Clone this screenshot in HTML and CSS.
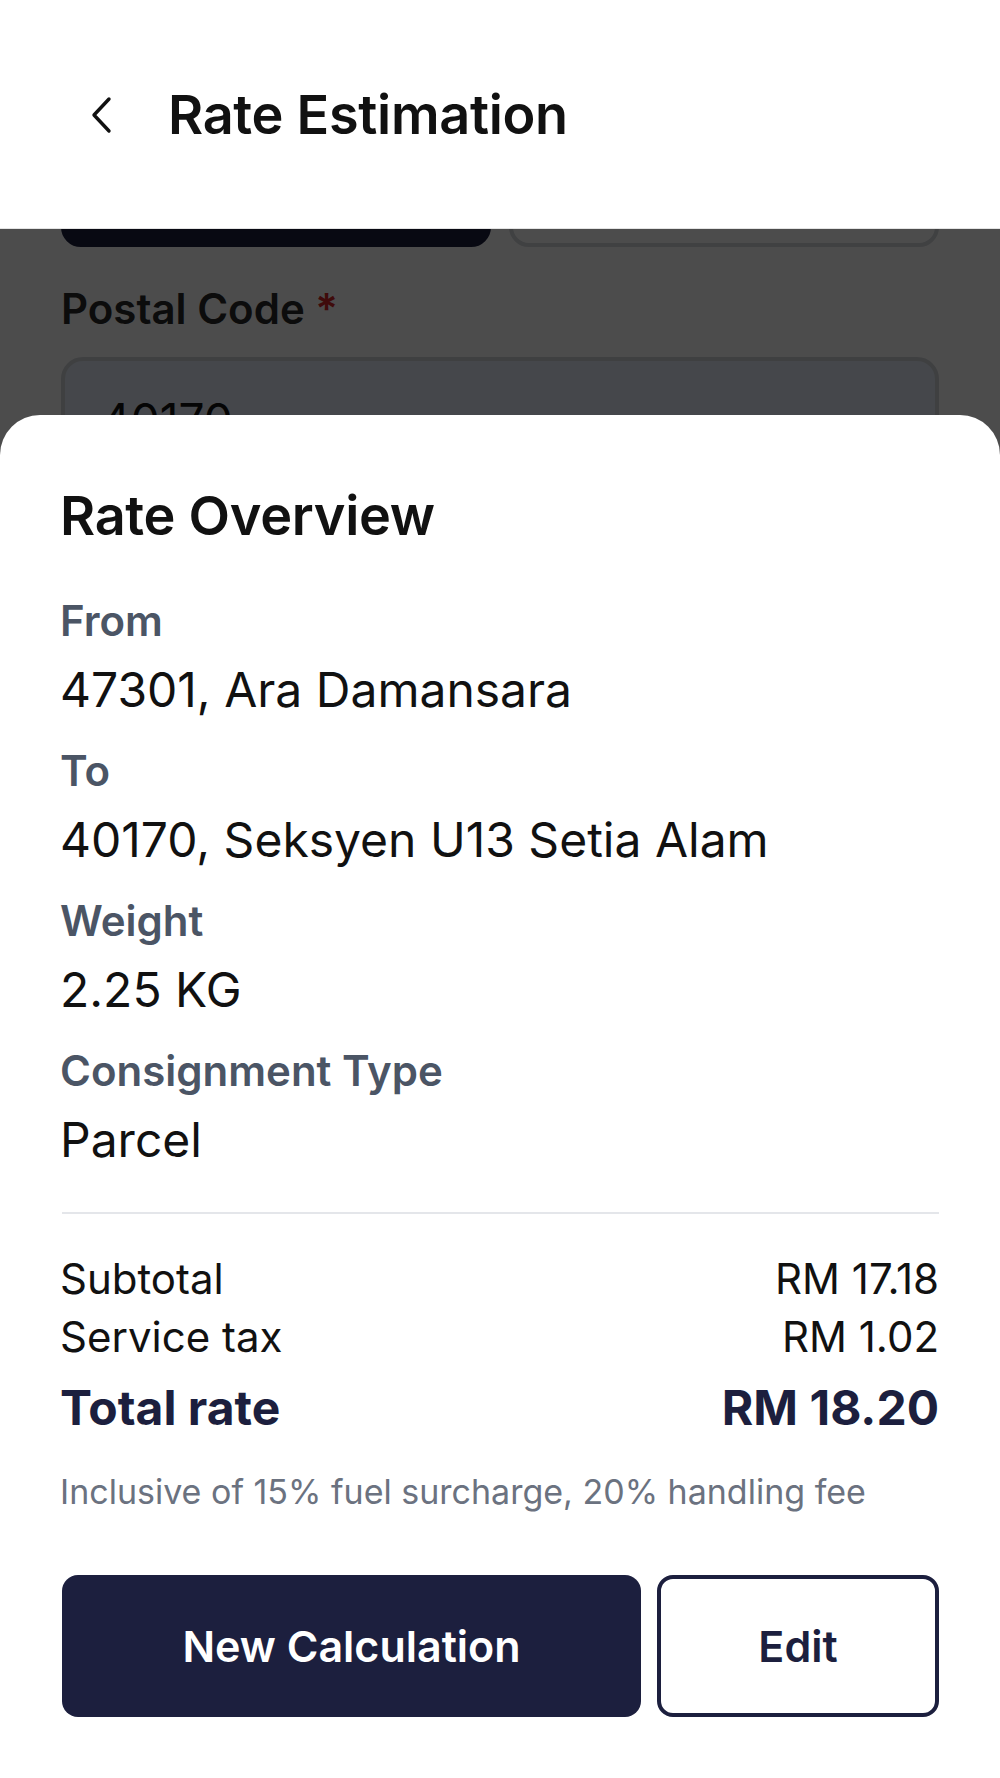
FILE: index.html
```html
<!DOCTYPE html>
<html lang="en">
<head>
    <meta charset="UTF-8">
    <meta name="viewport" content="width=device-width, initial-scale=1.0">
    <title>Rate Estimation</title>
    <link rel="stylesheet" href="styles.css">
</head>
<body>
    <div id="app">
        <header class="topbar">
            <button class="back" aria-label="Back">
                <svg width="24" height="38" viewBox="0 0 24 38" fill="none">
                    <path d="M20 3 L5 19 L20 35" stroke="#111" stroke-width="3.4" stroke-linecap="round" stroke-linejoin="round"/>
                </svg>
            </button>
            <h1>Rate Estimation</h1>
        </header>

        <!-- form behind the sheet, scrolled down a bit -->
        <main class="form">
            <div class="toggle-row">
                <div class="toggle active"></div>
                <div class="toggle"></div>
            </div>
            <label class="form-label">Postal Code <span class="req">*</span></label>
            <div class="input">40170</div>
        </main>

        <div class="backdrop"></div>

        <section class="sheet">
            <h2>Rate Overview</h2>

            <div class="field">
                <div class="label">From</div>
                <div class="value">47301, Ara Damansara</div>
            </div>
            <div class="field">
                <div class="label">To</div>
                <div class="value">40170, Seksyen U13 Setia Alam</div>
            </div>
            <div class="field">
                <div class="label">Weight</div>
                <div class="value">2.25 KG</div>
            </div>
            <div class="field">
                <div class="label">Consignment Type</div>
                <div class="value">Parcel</div>
            </div>

            <hr class="divider">

            <div class="summary">
                <div class="row">
                    <span>Subtotal</span>
                    <span>RM 17.18</span>
                </div>
                <div class="row">
                    <span>Service tax</span>
                    <span>RM 1.02</span>
                </div>
                <div class="row total">
                    <span>Total rate</span>
                    <span>RM 18.20</span>
                </div>
            </div>

            <p class="note">Inclusive of 15% fuel surcharge, 20% handling fee</p>

            <div class="actions">
                <button class="btn primary">New Calculation</button>
                <button class="btn outline">Edit</button>
            </div>
        </section>
    </div>
</body>
</html>
```

FILE: styles.css
```css
* {
    box-sizing: border-box;
}

body {
    margin: 0;
    font-family: Inter, "Noto Sans", sans-serif;
    background-color: #fff;
    color: #111;
}

#app {
    width: 1000px;
    height: 1778px;
    overflow: hidden;
    position: relative;
}

.topbar {
    height: 229px;
    display: flex;
    align-items: center;
    padding-left: 89px;
    background-color: #fff;
    border-bottom: 1px solid #e3e3e3;
    position: relative;
    z-index: 3;
}

.back {
    background: none;
    border: none;
    padding: 0;
    width: 24px;
    height: 38px;
    margin-right: 55px;
    margin-top: 2px;
    display: flex;
}

.topbar h1 {
    margin: 0;
    font-size: 54px;
    font-weight: 600;
    letter-spacing: -0.3px;
    color: #111;
}

.form {
    padding: 0 61px;
}

.toggle-row {
    display: flex;
    gap: 18px;
    margin-top: -42px;
}

.toggle {
    flex: 1;
    height: 60px;
    border-radius: 20px;
    border: 4px solid #d6d9de;
    background-color: #fff;
}

.toggle.active {
    background-color: #1c1f3e;
    border-color: #1c1f3e;
}

.form-label {
    display: block;
    margin-top: 38px;
    font-size: 42px;
    font-weight: 600;
    line-height: 48px;
    color: #2a2a2a;
}

.req {
    color: #d42626;
}

.input {
    margin-top: 24px;
    height: 120px;
    border: 4px solid #d3d6db;
    border-radius: 22px;
    background-color: #e6eefa;
    padding: 31px 36px;
    font-size: 46px;
    color: #111;
}

.backdrop {
    position: absolute;
    left: 0;
    right: 0;
    top: 229px;
    bottom: 0;
    background-color: rgba(0, 0, 0, 0.7);
    z-index: 1;
}

.sheet {
    position: absolute;
    left: 0;
    right: 0;
    top: 415px;
    bottom: 0;
    z-index: 2;
    background-color: #fff;
    border-radius: 40px 40px 0 0;
    padding: 69px 61px 0 60px;
}

.sheet h2 {
    margin: 0 0 48px;
    font-size: 54px;
    line-height: 64px;
    font-weight: 600;
    letter-spacing: -0.3px;
    color: #111;
}

.field {
    margin-bottom: 27px;
}

.label {
    font-size: 42px;
    line-height: 50px;
    font-weight: 600;
    color: #4b5565;
    margin-bottom: 15px;
}

.value {
    font-size: 48px;
    line-height: 58px;
    color: #111;
}

.divider {
    border: none;
    height: 2px;
    background-color: #e4e6ea;
    margin: 43px 0 0 2px;
}

.summary {
    margin-top: 36px;
}

.row {
    display: flex;
    justify-content: space-between;
    font-size: 42px;
    line-height: 58px;
    color: #111;
}

.row.total {
    margin-top: 13px;
    font-size: 48px;
    font-weight: 700;
    color: #1c1f3e;
}

.note {
    margin: 33px 0 0;
    font-size: 34px;
    line-height: 44px;
    color: #6b7280;
}

.actions {
    display: flex;
    gap: 16px;
    margin-top: 61px;
    padding-left: 2px;
}

.btn {
    height: 142px;
    border-radius: 16px;
    font-family: Inter, "Noto Sans", sans-serif;
    font-size: 43px;
    font-weight: 600;
    cursor: pointer;
}

.btn.primary {
    flex: 0 0 579px;
    background-color: #1c1f3e;
    color: #fff;
    border: none;
}

.btn.outline {
    flex: 1;
    background-color: #fff;
    color: #1c1f3e;
    border: 4px solid #1c1f3e;
}
```
